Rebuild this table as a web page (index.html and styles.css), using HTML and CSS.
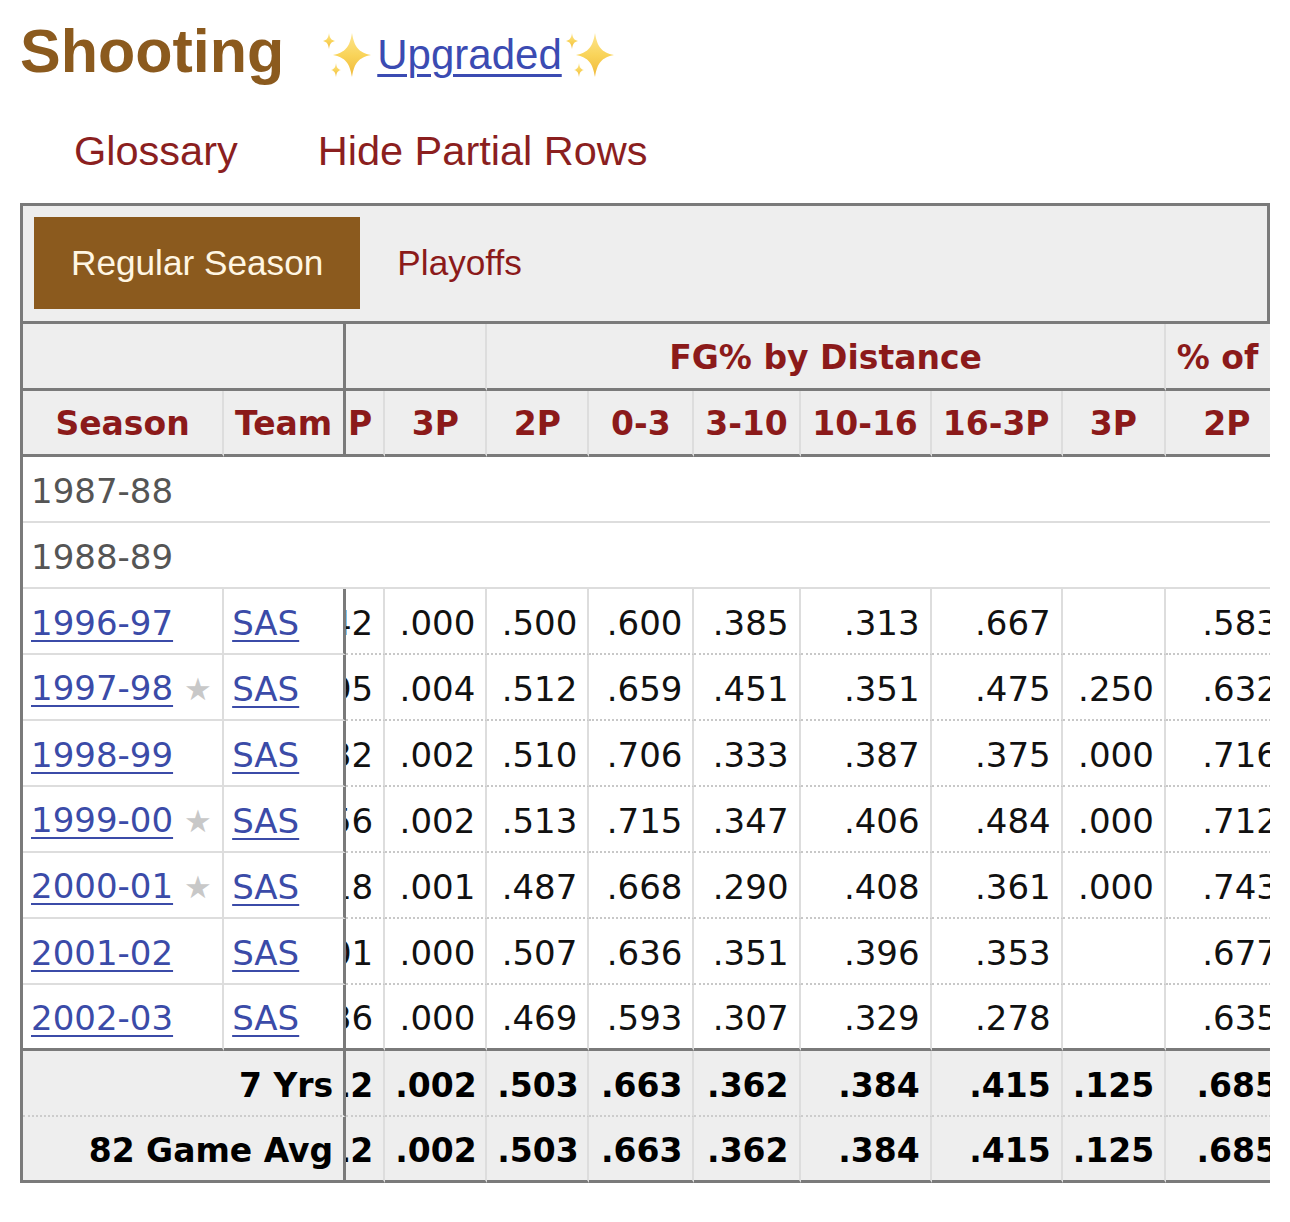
FILE: index.html
```html
<!DOCTYPE html>
<html lang="en">
<head>
<meta charset="utf-8">
<title>Shooting</title>
<link rel="stylesheet" href="styles.css">
</head>
<body>
<div class="page">
  <div class="title-row">
    <h2 class="title">Shooting</h2>
    <div class="upgraded">
      <svg class="sparkle" viewBox="0 0 52 46" width="52" height="46" aria-hidden="true">
        <defs><linearGradient id="g1" x1="0" y1="0" x2="0" y2="1"><stop offset="0" stop-color="#fde590"/><stop offset="0.5" stop-color="#f9d45a"/><stop offset="1" stop-color="#f0b93a"/></linearGradient></defs>
        <path fill="url(#g1)" d="M31 1 C33.3 15.3 37.65 20.36 50 23 C37.65 25.64 33.3 30.7 31 45 C28.7 30.7 24.35 25.64 12 23 C24.35 20.36 28.7 15.3 31 1 Z"/>
        <path fill="url(#g1)" d="M8 1 C8.72 6.2 10.1 8.04 14 9 C10.1 9.96 8.72 11.8 8 17 C7.28 11.8 5.9 9.96 2 9 C5.9 8.04 7.28 6.2 8 1 Z"/>
        <path fill="url(#g1)" d="M15 31 C15.6 35.55 16.75 37.16 20 38 C16.75 38.84 15.6 40.45 15 45 C14.4 40.45 13.25 38.84 10 38 C13.25 37.16 14.4 35.55 15 31 Z"/>
      </svg>
      <a class="up-link" href="#">Upgraded</a>
      <svg class="sparkle" viewBox="0 0 52 46" width="52" height="46" aria-hidden="true">
        <defs><linearGradient id="g2" x1="0" y1="0" x2="0" y2="1"><stop offset="0" stop-color="#fde590"/><stop offset="0.5" stop-color="#f9d45a"/><stop offset="1" stop-color="#f0b93a"/></linearGradient></defs>
        <path fill="url(#g2)" d="M31 1 C33.3 15.3 37.65 20.36 50 23 C37.65 25.64 33.3 30.7 31 45 C28.7 30.7 24.35 25.64 12 23 C24.35 20.36 28.7 15.3 31 1 Z"/>
        <path fill="url(#g2)" d="M8 1 C8.72 6.2 10.1 8.04 14 9 C10.1 9.96 8.72 11.8 8 17 C7.28 11.8 5.9 9.96 2 9 C5.9 8.04 7.28 6.2 8 1 Z"/>
        <path fill="url(#g2)" d="M15 31 C15.6 35.55 16.75 37.16 20 38 C16.75 38.84 15.6 40.45 15 45 C14.4 40.45 13.25 38.84 10 38 C13.25 37.16 14.4 35.55 15 31 Z"/>
      </svg>
    </div>
  </div>

  <div class="links">
    <a href="#">Glossary</a>
    <a href="#">Hide Partial Rows</a>
  </div>

  <div class="tabs">
    <span class="tab active">Regular Season</span>
    <span class="tab">Playoffs</span>
  </div>

  <div class="table-wrap">
    <table class="stats">
      <colgroup>
        <col class="c-season"><col class="c-team"><col class="c-part"><col class="c-3p"><col class="c-2p"><col class="c-03"><col class="c-310"><col class="c-1016"><col class="c-163p"><col class="c-3pb"><col class="c-2pb">
      </colgroup>
      <thead>
        <tr class="over">
          <th colspan="2" class="frz"></th>
          <th colspan="2"></th>
          <th colspan="6">FG% by Distance</th>
          <th class="open">% of FG Ast'd</th>
        </tr>
        <tr class="hdr">
          <th>Season</th>
          <th class="frz">Team</th>
          <th class="part"><div class="pin">16-3P</div></th>
          <th>3P</th>
          <th>2P</th>
          <th>0-3</th>
          <th>3-10</th>
          <th>10-16</th>
          <th>16-3P</th>
          <th>3P</th>
          <th>2P</th>
        </tr>
      </thead>
      <tbody>
        <tr class="partial"><td colspan="11">1987-88</td></tr>
        <tr class="partial"><td colspan="11">1988-89</td></tr>
        <tr>
          <td class="season"><a href="#">1996-97</a></td><td class="team frz"><a href="#">SAS</a></td>
          <td class="part"><div class="pin">.042</div></td>
          <td>.000</td><td>.500</td><td>.600</td><td>.385</td><td>.313</td><td>.667</td><td></td><td>.583</td>
        </tr>
        <tr>
          <td class="season"><a href="#">1997-98</a> <span class="star">★</span></td><td class="team frz"><a href="#">SAS</a></td>
          <td class="part"><div class="pin">.095</div></td>
          <td>.004</td><td>.512</td><td>.659</td><td>.451</td><td>.351</td><td>.475</td><td>.250</td><td>.632</td>
        </tr>
        <tr>
          <td class="season"><a href="#">1998-99</a></td><td class="team frz"><a href="#">SAS</a></td>
          <td class="part"><div class="pin">.032</div></td>
          <td>.002</td><td>.510</td><td>.706</td><td>.333</td><td>.387</td><td>.375</td><td>.000</td><td>.716</td>
        </tr>
        <tr>
          <td class="season"><a href="#">1999-00</a> <span class="star">★</span></td><td class="team frz"><a href="#">SAS</a></td>
          <td class="part"><div class="pin">.056</div></td>
          <td>.002</td><td>.513</td><td>.715</td><td>.347</td><td>.406</td><td>.484</td><td>.000</td><td>.712</td>
        </tr>
        <tr>
          <td class="season"><a href="#">2000-01</a> <span class="star">★</span></td><td class="team frz"><a href="#">SAS</a></td>
          <td class="part"><div class="pin">.018</div></td>
          <td>.001</td><td>.487</td><td>.668</td><td>.290</td><td>.408</td><td>.361</td><td>.000</td><td>.743</td>
        </tr>
        <tr>
          <td class="season"><a href="#">2001-02</a></td><td class="team frz"><a href="#">SAS</a></td>
          <td class="part"><div class="pin">.001</div></td>
          <td>.000</td><td>.507</td><td>.636</td><td>.351</td><td>.396</td><td>.353</td><td></td><td>.677</td>
        </tr>
        <tr class="last">
          <td class="season"><a href="#">2002-03</a></td><td class="team frz"><a href="#">SAS</a></td>
          <td class="part"><div class="pin">.036</div></td>
          <td>.000</td><td>.469</td><td>.593</td><td>.307</td><td>.329</td><td>.278</td><td></td><td>.635</td>
        </tr>
      </tbody>
      <tfoot>
        <tr class="career">
          <td colspan="2" class="frz label">7 Yrs</td>
          <td class="part"><div class="pin">.012</div></td>
          <td>.002</td><td>.503</td><td>.663</td><td>.362</td><td>.384</td><td>.415</td><td>.125</td><td>.685</td>
        </tr>
        <tr class="avg">
          <td colspan="2" class="frz label">82 Game Avg</td>
          <td class="part"><div class="pin">.012</div></td>
          <td>.002</td><td>.503</td><td>.663</td><td>.362</td><td>.384</td><td>.415</td><td>.125</td><td>.685</td>
        </tr>
      </tfoot>
    </table>
  </div>
</div>
</body>
</html>
```

FILE: styles.css
```css
html, body {
  margin: 0;
  padding: 0;
  background: #ffffff;
}

.page {
  font-family: "Liberation Sans", Arial, Helvetica, sans-serif;
  color: #000;
}

/* ---------- title ---------- */
.title-row {
  display: flex;
  align-items: center;
  height: 80px;
  margin-top: 11px;
  padding-left: 20px;
}

.title {
  margin: 0;
  font-size: 61px;
  line-height: 1;
  font-weight: 700;
  color: #8b5a1e;
}

.upgraded {
  display: flex;
  align-items: center;
  margin: 8px 0 0 37px;
}

.sparkle {
  display: block;
  flex: none;
}

.up-link {
  font-size: 42px;
  line-height: 1;
  color: #3b4bb2;
  text-decoration: underline;
  text-decoration-thickness: 3px;
  text-underline-offset: 5px;
  margin: 0 0 0 4px;
}

.up-link + .sparkle {
  margin-left: 2px;
}

/* ---------- links row ---------- */
.links {
  display: flex;
  align-items: center;
  gap: 80px;
  height: 104px;
  padding: 8px 0 0 74px;
}

.links a {
  font-size: 41.5px;
  line-height: 1;
  color: #8b1f1f;
  text-decoration: none;
}

/* ---------- tabs ---------- */
.tabs {
  display: flex;
  align-items: center;
  gap: 37px;
  margin-left: 20px;
  width: 1250px;
  box-sizing: border-box;
  border: 3px solid #7a7a7a;
  background: #eeeeee;
  padding: 11px 11px 12px;
}

.tab {
  font-size: 35.2px;
  line-height: 92px;
  color: #8b1a1a;
}

.tab.active {
  background: #8b5a1e;
  color: #fff6e3;
  padding: 0 37px;
}

/* ---------- table ---------- */
.table-wrap {
  margin-left: 20px;
  width: 1250px;
  overflow: hidden;
}

.stats {
  border-collapse: separate;
  border-spacing: 0;
  table-layout: fixed;
  width: 1270px;
  border-left: 3px solid #7a7a7a;
  font-family: "DejaVu Sans", Verdana, sans-serif;
  font-size: 34px;
}

.c-season { width: 201px; }
.c-team   { width: 122px; }
.c-part   { width: 39px; }
.c-3p     { width: 102px; }
.c-2p     { width: 102px; }
.c-03     { width: 105px; }
.c-310    { width: 106px; }
.c-1016   { width: 131px; }
.c-163p   { width: 131px; }
.c-3pb    { width: 103px; }
.c-2pb    { width: 124px; }

.stats tr.over { height: 67px; }
.stats tr.hdr { height: 66px; }
.stats tbody tr { height: 66px; }
.stats tr.career { height: 66px; }
.stats tr.avg { height: 66px; }

.stats th,
.stats td {
  padding: 3px 10px 0;
  line-height: 40px;
  white-space: nowrap;
  vertical-align: middle;
  border-right: 2px solid #dddddd;
  border-bottom: 2px solid #dddddd;
}

.stats th {
  background: #eeeeee;
  color: #8b1a1a;
  font-size: 33px;
  font-weight: 700;
  text-align: center;
  border-bottom: 3px solid #7a7a7a;
}

.stats tr.over th {
  padding-top: 4px;
}

.stats tr.over th.open {
  text-align: left;
  padding-left: 11px;
  border-right: none;
}

.stats .frz {
  border-right: 3px solid #7a7a7a !important;
}

.stats .part {
  padding-left: 0;
  padding-right: 0;
  overflow: hidden;
}

.stats .part .pin {
  width: 119px;
  margin-left: -92px;
  padding-right: 10px;
  text-align: right;
}

.stats th.part .pin {
  width: 129px;
  padding-right: 0;
  text-align: center;
}

.stats td {
  text-align: right;
  color: #111;
  border-bottom: 2px dotted #c8c8c8;
}

.stats td.season,
.stats td.team {
  text-align: left;
  padding-left: 8px;
  border-bottom: 2px solid #dddddd;
}

.stats a {
  color: #3b4ba8;
  text-decoration: underline;
  text-decoration-thickness: 2px;
  text-underline-offset: 5px;
}

.star {
  color: #c8c8c8;
  font-size: 31px;
}

.stats tr.partial td {
  text-align: left;
  padding-left: 8px;
  color: #555555;
  border-right: none;
  border-bottom: 2px solid #dddddd;
}

.stats tr.last td {
  border-bottom: 3px solid #7a7a7a;
}

.stats tfoot td {
  background: #eeeeee;
  font-weight: 700;
  font-size: 33px;
  color: #000;
  padding-top: 5px;
}

.stats tfoot td.label {
  text-align: right;
}

.stats tr.career td {
  border-bottom: 2px dotted #cccccc;
}

.stats tr.avg td {
  border-bottom: 3px solid #7a7a7a;
}
```
